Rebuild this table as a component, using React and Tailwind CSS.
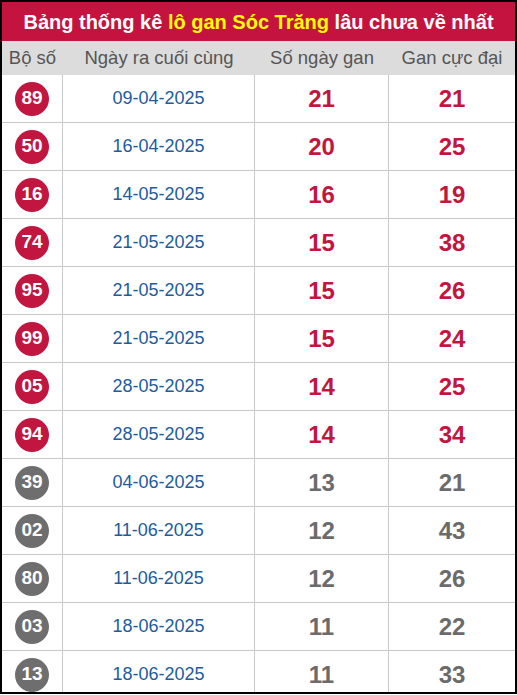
import React from "react";

const rows = [
  ["89", "09-04-2025", "21", "21", true],
  ["50", "16-04-2025", "20", "25", true],
  ["16", "14-05-2025", "16", "19", true],
  ["74", "21-05-2025", "15", "38", true],
  ["95", "21-05-2025", "15", "26", true],
  ["99", "21-05-2025", "15", "24", true],
  ["05", "28-05-2025", "14", "25", true],
  ["94", "28-05-2025", "14", "34", true],
  ["39", "04-06-2025", "13", "21", false],
  ["02", "11-06-2025", "12", "43", false],
  ["80", "11-06-2025", "12", "26", false],
  ["03", "18-06-2025", "11", "22", false],
  ["13", "18-06-2025", "11", "33", false],
];

export default function App() {
  return (
    <div
      className="w-[517px] h-[695px] overflow-hidden bg-white"
      style={{ fontFamily: '"Liberation Sans", Arial, sans-serif' }}
    >
      <div className="w-[517px] h-[694px] border-2 border-black overflow-hidden flex flex-col">
        <div className="h-[39px] shrink-0 bg-[#c5133f] flex items-center justify-center text-[20px] font-bold text-white">
          <span>
            Bảng thống kê <span className="text-[#ffff00]">lô gan Sóc Trăng</span> lâu chưa về nhất
          </span>
        </div>
        <div className="h-[34px] shrink-0 bg-[#dcdcdc] grid grid-cols-[61px_192px_134px_126px] text-[18.5px] text-[#555555]">
          <div className="flex items-center justify-center">Bộ số</div>
          <div className="flex items-center justify-center">Ngày ra cuối cùng</div>
          <div className="flex items-center justify-center">Số ngày gan</div>
          <div className="flex items-center justify-center">Gan cực đại</div>
        </div>
        {rows.map(([n, d, a, b, hot]) => (
          <div
            key={n}
            className="h-[48px] shrink-0 grid grid-cols-[61px_192px_134px_126px] border-b border-[#c8c8c8]"
          >
            <div className="flex items-center justify-center border-r border-[#c8c8c8]">
              <span
                className={
                  "w-[34px] h-[34px] rounded-full flex items-center justify-center text-white font-bold text-[19px] " +
                  (hot ? "bg-[#c0163f]" : "bg-[#6e6e6e]")
                }
              >
                {n}
              </span>
            </div>
            <div className="flex items-center justify-center border-r border-[#c8c8c8] text-[18px] text-[#1d5c9c]">
              {d}
            </div>
            <div
              className={
                "flex items-center justify-center border-r border-[#c8c8c8] text-[24px] font-bold " +
                (hot ? "text-[#c0163f]" : "text-[#6b6b6b]")
              }
            >
              {a}
            </div>
            <div
              className={
                "flex items-center justify-center text-[24px] font-bold " +
                (hot ? "text-[#c0163f]" : "text-[#6b6b6b]")
              }
            >
              {b}
            </div>
          </div>
        ))}
      </div>
    </div>
  );
}
